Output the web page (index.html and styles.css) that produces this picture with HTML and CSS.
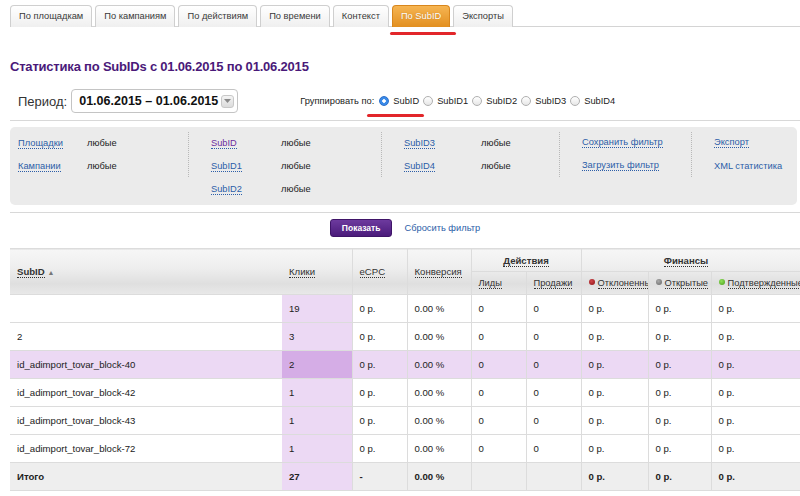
FILE: index.html
```html
<!DOCTYPE html>
<html lang="ru">
    <head>
        <title>Статистика по SubIDs</title>
        <meta charset="UTF-8">
        <link rel="stylesheet" href="styles.css">
    </head>
    <body>
        <div class="page">
            <ul class="tabs">
                <li><a href="#">По площадкам</a></li>
                <li><a href="#">По кампаниям</a></li>
                <li><a href="#">По действиям</a></li>
                <li><a href="#">По времени</a></li>
                <li><a href="#">Контекст</a></li>
                <li class="active"><a href="#">По SubID</a></li>
                <li><a href="#">Экспорты</a></li>
            </ul>

            <h1 class="title">Статистика по SubIDs с 01.06.2015 по 01.06.2015</h1>

            <div class="period">
                <span class="period-label">Период:</span>
                <div class="date">
                    <span>01.06.2015 – 01.06.2015</span>
                    <span class="date-btn">
                        <svg width="7" height="4" viewBox="0 0 7 4"><path d="M0 0h7L3.5 4z" fill="#8a8a8a"/></svg>
                    </span>
                </div>

                <div class="group">
                    <span class="group-label">Группировать по:</span>
                    <label class="option current"><span class="radio checked"></span>SubID</label>
                    <label class="option"><span class="radio"></span>SubID1</label>
                    <label class="option"><span class="radio"></span>SubID2</label>
                    <label class="option"><span class="radio"></span>SubID3</label>
                    <label class="option"><span class="radio"></span>SubID4</label>
                </div>
            </div>

            <div class="divider"></div>

            <div class="filter">
                <div class="filter-col first">
                    <div class="filter-row"><span class="key"><a class="link" href="#">Площадки</a></span>любые</div>
                    <div class="filter-row"><span class="key"><a class="link" href="#">Кампании</a></span>любые</div>
                </div>
                <div class="sep"></div>
                <div class="filter-col second">
                    <div class="filter-row"><span class="key"><a class="link visited" href="#">SubID</a></span>любые</div>
                    <div class="filter-row"><span class="key"><a class="link" href="#">SubID1</a></span>любые</div>
                    <div class="filter-row"><span class="key"><a class="link" href="#">SubID2</a></span>любые</div>
                </div>
                <div class="sep"></div>
                <div class="filter-col third">
                    <div class="filter-row"><span class="key"><a class="link" href="#">SubID3</a></span>любые</div>
                    <div class="filter-row"><span class="key"><a class="link" href="#">SubID4</a></span>любые</div>
                </div>
                <div class="sep"></div>
                <div class="filter-col fourth">
                    <div class="filter-row"><a class="link" href="#">Сохранить фильтр</a></div>
                    <div class="filter-row"><a class="link" href="#">Загрузить фильтр</a></div>
                </div>
                <div class="sep"></div>
                <div class="filter-col fifth">
                    <div class="filter-row"><a class="link" href="#">Экспорт</a></div>
                    <div class="filter-row"><a class="plain" href="#">XML статистика</a></div>
                </div>
            </div>

            <div class="divider"></div>

            <div class="actions">
                <button class="show">Показать</button>
                <a class="reset" href="#">Сбросить фильтр</a>
            </div>

            <div class="grid-wrap">
                <table class="grid">
                    <colgroup>
                        <col class="c-subid">
                        <col class="c-clicks">
                        <col class="c-ecpc">
                        <col class="c-conv">
                        <col class="c-leads">
                        <col class="c-sales">
                        <col class="c-rej">
                        <col class="c-open">
                        <col class="c-conf">
                    </colgroup>
                    <thead>
                        <tr>
                            <th rowspan="2" class="no-line"><span class="sort bold">SubID</span> <span class="arrow">▲</span></th>
                            <th rowspan="2"><span class="sort">Клики</span></th>
                            <th rowspan="2"><span class="sort">eCPC</span></th>
                            <th rowspan="2"><span class="sort">Конверсия</span></th>
                            <th colspan="2" class="group-head"><span class="sort bold">Действия</span></th>
                            <th colspan="3" class="group-head fin"><span class="sort bold">Финансы</span></th>
                        </tr>
                        <tr class="sub">
                            <th><span class="sort">Лиды</span></th>
                            <th><span class="sort">Продажи</span></th>
                            <th><span class="dot red"></span><span class="sort">Отклоненные</span></th>
                            <th><span class="dot grey"></span><span class="sort">Открытые</span></th>
                            <th><span class="dot green"></span><span class="sort">Подтвержденные</span></th>
                        </tr>
                    </thead>
                    <tbody>
                        <tr>
                            <td></td><td class="clicks">19</td><td>0 р.</td><td>0.00 %</td><td>0</td><td>0</td><td>0 р.</td><td>0 р.</td><td>0 р.</td>
                        </tr>
                        <tr>
                            <td>2</td><td class="clicks">3</td><td>0 р.</td><td>0.00 %</td><td>0</td><td>0</td><td>0 р.</td><td>0 р.</td><td>0 р.</td>
                        </tr>
                        <tr class="hover">
                            <td>id_adimport_tovar_block-40</td><td class="clicks">2</td><td>0 р.</td><td>0.00 %</td><td>0</td><td>0</td><td>0 р.</td><td>0 р.</td><td>0 р.</td>
                        </tr>
                        <tr>
                            <td>id_adimport_tovar_block-42</td><td class="clicks">1</td><td>0 р.</td><td>0.00 %</td><td>0</td><td>0</td><td>0 р.</td><td>0 р.</td><td>0 р.</td>
                        </tr>
                        <tr>
                            <td>id_adimport_tovar_block-43</td><td class="clicks">1</td><td>0 р.</td><td>0.00 %</td><td>0</td><td>0</td><td>0 р.</td><td>0 р.</td><td>0 р.</td>
                        </tr>
                        <tr>
                            <td>id_adimport_tovar_block-72</td><td class="clicks">1</td><td>0 р.</td><td>0.00 %</td><td>0</td><td>0</td><td>0 р.</td><td>0 р.</td><td>0 р.</td>
                        </tr>
                        <tr class="total">
                            <td>Итого</td><td class="clicks">27</td><td>-</td><td>0.00 %</td><td></td><td></td><td>0 р.</td><td>0 р.</td><td>0 р.</td>
                        </tr>
                    </tbody>
                </table>
            </div>
        </div>
    </body>
</html>
```

FILE: styles.css
```css
html {
    box-sizing: border-box;
}
*, *:before, *:after {
    box-sizing: inherit;
}
body {
    margin: 0;
    overflow: hidden;
    background: #fff;
    color: #222;
    font-family: "Liberation Sans", Arial, sans-serif;
    font-size: 9.3px;
}
a {
    text-decoration: none;
}
.page {
    padding: 5px 0 0 10px;
}

/* tabs */
.tabs {
    display: flex;
    gap: 3px;
    height: 22px;
    margin: 0;
    padding: 0;
    list-style: none;
    border-bottom: 1px solid #d4d4d4;
}
    .tabs li {
        position: relative;
    }
    .tabs a {
        display: block;
        height: 22px;
        padding: 0 8px;
        line-height: 21px;
        font-size: 9.3px;
        color: #3a3a3a;
        border: 1px solid #cfcfcf;
        border-bottom: none;
        border-radius: 4px 4px 0 0;
        background: linear-gradient(#fff, #efefef);
    }
    .tabs .active a {
        color: #fff;
        border-color: #d8861c;
        background: linear-gradient(#f6b552, #e28f20);
        text-shadow: 0 0 1px rgba(150, 80, 0, .5);
    }
    .tabs .active:after {
        content: '';
        position: absolute;
        left: -2px;
        right: -6px;
        top: 27px;
        height: 3px;
        border-radius: 2px;
        background: #e2262a;
    }

.title {
    margin: 31px 0 0;
    font-size: 13px;
    letter-spacing: -.2px;
    line-height: 18px;
    color: #4a1979;
}

/* period + grouping */
.period {
    display: flex;
    align-items: center;
    height: 24px;
    margin-top: 13px;
    padding-left: 8px;
}
    .period-label {
        font-size: 13px;
        color: #333;
        margin-right: 4px;
    }
    .date {
        display: flex;
        align-items: center;
        justify-content: space-between;
        width: 167px;
        height: 24px;
        padding: 0 3px 0 7px;
        border: 1px solid #c4c4c4;
        border-radius: 4px;
        font-size: 12.5px;
        font-weight: bold;
        color: #111;
    }
    .date-btn {
        display: flex;
        align-items: center;
        justify-content: center;
        width: 13px;
        height: 13px;
        border: 1px solid #c8c8c8;
        border-radius: 3px;
        background: linear-gradient(#f4f4f4, #dcdcdc);
    }
.group {
    display: flex;
    align-items: center;
    margin-left: 62px;
    font-size: 9.3px;
    color: #222;
}
    .group-label {
        margin-right: 1px;
    }
    .option {
        position: relative;
        display: flex;
        align-items: center;
    }
    .option.current:after {
        content: '';
        position: absolute;
        left: -8px;
        right: -5px;
        top: 18px;
        height: 3px;
        border-radius: 2px;
        background: #e2262a;
    }
    .radio {
        width: 10px;
        height: 10px;
        margin: 0 4px 0 4px;
        border: 1px solid #b0b0b0;
        border-radius: 50%;
        background: linear-gradient(#fff, #e6e6e6);
    }
    .radio.checked {
        border-color: #2b6fcb;
        background: radial-gradient(circle, #fff 0, #fff 1.5px, #3a8ae8 2px);
    }

.divider {
    height: 1px;
    margin-top: 7px;
    background: #d8d8d8;
}

/* filter box */
.filter {
    display: flex;
    height: 78px;
    margin: 6px 3px 0 0;
    padding: 4px 0 0;
    border-radius: 5px;
    background: #ebebeb;
}
    .filter-col {
        padding-left: 22px;
    }
    .filter-col.first { width: 178px; padding-left: 8px; }
    .filter-col.second { width: 192px; }
    .filter-col.third { width: 177px; }
    .filter-col.fourth { width: 131px; }
    .filter-row {
        display: flex;
        align-items: center;
        height: 23px;
        color: #222;
    }
    .key { flex: none; }
    .first .key { width: 69px; }
    .second .key { width: 70px; }
    .third .key { width: 77px; }
    .link {
        color: #2c5ea8;
        border-bottom: 1px dotted #2c5ea8;
    }
    .link.visited {
        color: #6c2e9e;
        border-bottom-color: #2c5ea8;
    }
    .plain {
        color: #2c5ea8;
    }
    .sep {
        width: 0;
        height: 45px;
        margin-top: 1px;
        border-left: 1px dotted #b8b8b8;
    }

/* actions */
.actions {
    display: flex;
    align-items: center;
    justify-content: center;
    gap: 12px;
    margin-top: 6px;
}
    .show {
        height: 18px;
        padding: 0 11px;
        border: 1px solid #3f1468;
        border-radius: 3px;
        background: linear-gradient(#6d3a9e, #4b1b7b);
        color: #fff;
        font-family: inherit;
        font-size: 8.5px;
        font-weight: bold;
    }
    .reset {
        font-size: 9.3px;
        color: #2c5ea8;
    }

/* table */
.grid-wrap {
    margin-top: 11px;
    overflow: hidden;
}
.grid {
    width: 800px;
    border-collapse: collapse;
    table-layout: fixed;
    font-size: 9.6px;
}
    .c-subid { width: 272px; }
    .c-clicks { width: 70px; }
    .c-ecpc { width: 55px; }
    .c-conv { width: 64px; }
    .c-leads { width: 55px; }
    .c-sales { width: 55px; }
    .c-rej { width: 67px; }
    .c-open { width: 63px; }
    .c-conf { width: 99px; }
    .grid thead {
        background: linear-gradient(#f6f6f6 0%, #eeeeee 40%, #dfdfdf 75%, #e9e9e9 100%);
        border-top: 1px solid #dcdcdc;
    }
    .grid th {
        height: 23px;
        padding: 0 7px;
        text-align: left;
        font-weight: normal;
        color: #333;
        white-space: nowrap;
        overflow: hidden;
        border-right: 1px solid #dcdcdc;
        border-bottom: 1px solid #dcdcdc;
    }
    .grid th.no-line {
        border-right: none;
    }
    .grid th.group-head {
        text-align: center;
    }
    .grid th.fin {
        padding-right: 26px;
    }
    .grid .sub th {
        border-bottom: none;
        font-size: 9.3px;
    }
    .sort {
        border-bottom: 1px dotted #333;
    }
    .bold {
        font-weight: bold;
    }
    .arrow {
        font-size: 7px;
        color: #777;
    }
    .dot {
        display: inline-block;
        width: 6px;
        height: 6px;
        margin-right: 3px;
        border-radius: 50%;
        vertical-align: 1px;
    }
    .dot.red { background: radial-gradient(circle at 40% 35%, #d0464a, #8e1216); }
    .dot.grey { background: radial-gradient(circle at 40% 35%, #aaa, #666); }
    .dot.green { background: radial-gradient(circle at 40% 35%, #8fe05a, #4a9e1a); }

    .grid tbody tr {
        border-top: 1px solid #dcdcdc;
    }
    .grid td {
        height: 28px;
        padding: 0 7px;
        color: #222;
        white-space: nowrap;
        overflow: hidden;
        border-right: 1px solid #dcdcdc;
        border-bottom: 1px solid #dcdcdc;
    }
    .grid td:first-child {
        border-right: none;
    }
    .grid td.clicks {
        background: #ecd9f4;
    }
    .grid tr.hover td {
        background: #ecd9f4;
    }
    .grid tr.hover td.clicks {
        background: #d5ade6;
    }
    .grid tr.total td {
        background: #eeeeee;
        font-weight: bold;
    }
    .grid tr.total td.clicks {
        background: #ecd9f4;
    }
```
